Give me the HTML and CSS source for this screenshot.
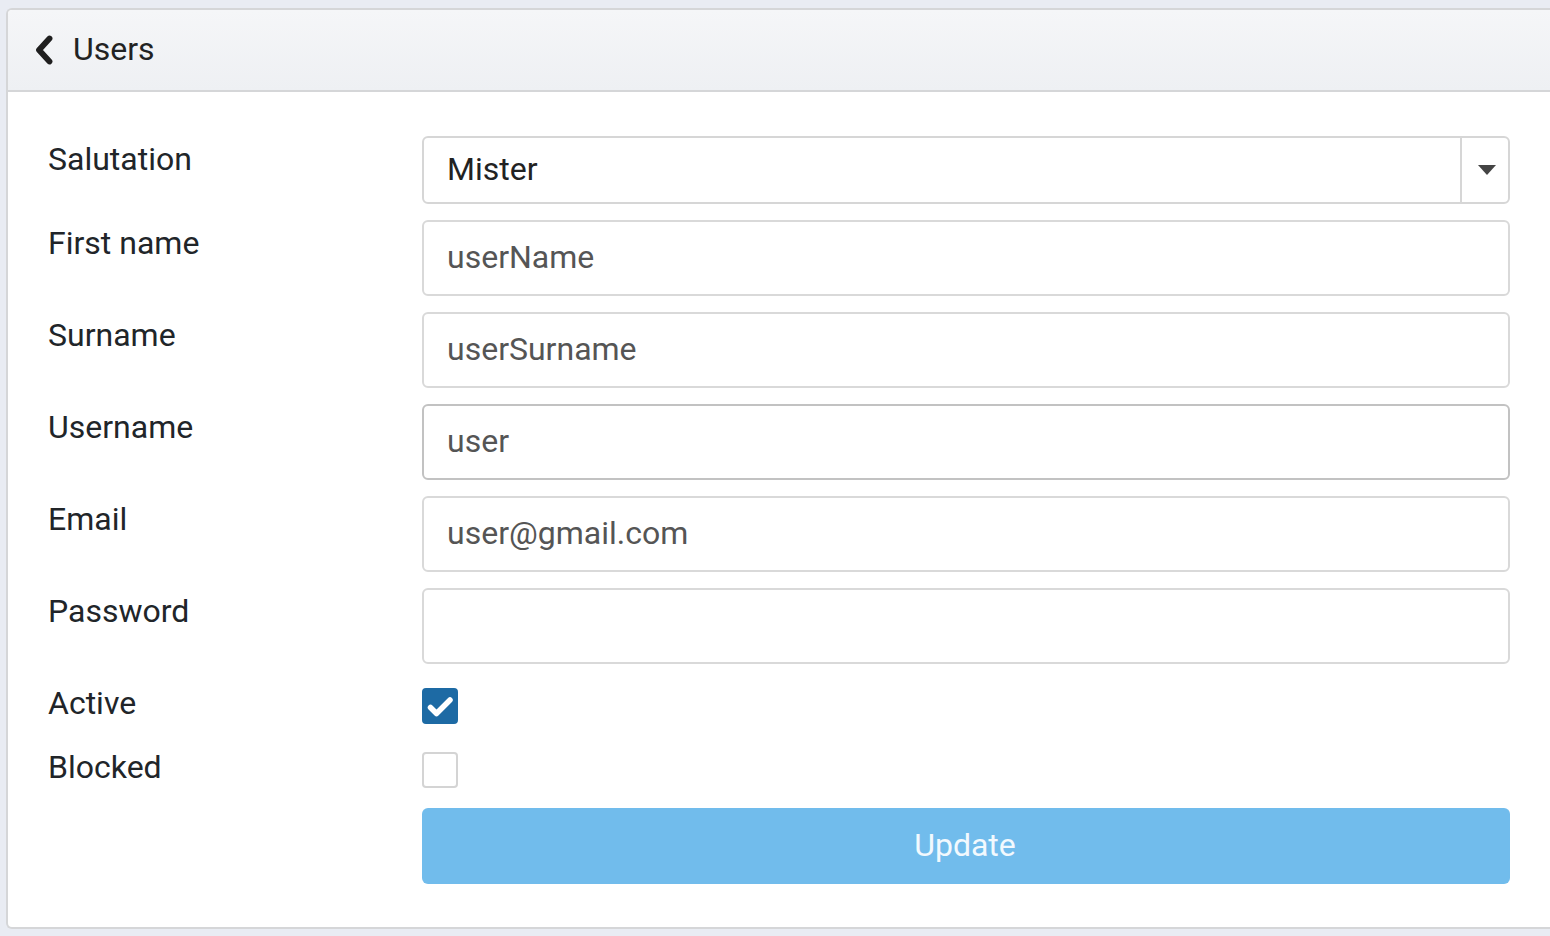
FILE: index.html
```html
<!DOCTYPE html>
<html>
<head>
<meta charset="utf-8">
<link rel="stylesheet" href="styles.css">
</head>
<body>
<div class="panel">
  <div class="panel-header">
    <svg class="back" width="18" height="30" viewBox="0 0 18 30"><polyline points="14.5,3.5 4,15 14.5,26.5" fill="none" stroke="#1f1f1f" stroke-width="5.8" stroke-linecap="round" stroke-linejoin="round"/></svg>
    <span class="title">Users</span>
  </div>
  <div class="form">
    <div class="label">Salutation</div>
    <div class="select">
      <span class="select-value">Mister</span>
      <span class="select-arrow"><span class="tri"></span></span>
    </div>

    <div class="label">First name</div>
    <div class="input">userName</div>

    <div class="label">Surname</div>
    <div class="input">userSurname</div>

    <div class="label">Username</div>
    <div class="input input-focus">user</div>

    <div class="label">Email</div>
    <div class="input">user@gmail.com</div>

    <div class="label">Password</div>
    <div class="input"></div>

    <div class="label">Active</div>
    <div class="check-cell"><span class="checkbox checked"><svg width="32" height="32" viewBox="0 0 32 32"><polyline points="6.5,17.5 12.5,23.5 26,10" fill="none" stroke="#fff" stroke-width="5.5" stroke-linecap="round" stroke-linejoin="round"/></svg></span></div>

    <div class="label">Blocked</div>
    <div class="check-cell"><span class="checkbox"></span></div>

    <div class="label"></div>
    <div class="button">Update</div>
  </div>
</div>
</body>
</html>
```

FILE: styles.css
```css
html, body {
  margin: 0;
  padding: 0;
}
body {
  background: #e9ecf3;
  font-family: Roboto, "Liberation Sans", sans-serif;
  overflow: hidden;
  height: 936px;
}
.panel {
  margin: 8px 0 0 6px;
  width: 1542px;
  background: #fff;
  border: 2px solid #d5d6d8;
  border-right: none;
  border-radius: 6px 0 0 6px;
  overflow: hidden;
}
.panel-header {
  box-sizing: border-box;
  height: 82px;
  padding-bottom: 2px;
  background: linear-gradient(#f5f6f8, #eef0f3);
  border-bottom: 2px solid #d5d6d8;
  display: flex;
  align-items: center;
  padding-left: 27px;
  gap: 20px;
}
.back {
  display: block;
  margin-top: 1px;
}
.title {
  font-size: 32px;
  color: #222;
  line-height: 48px;
}
.form {
  display: grid;
  grid-template-columns: 374px 1088px;
  row-gap: 16px;
  padding: 44px 0 43px 40px;
}
.label {
  font-size: 32px;
  line-height: 46px;
  height: 48px;
  color: #212529;
}
.select {
  height: 64px;
  border: 2px solid #d6d6d6;
  border-radius: 6px;
  display: flex;
  align-items: stretch;
}
.select-value {
  flex: 1;
  font-size: 32px;
  line-height: 48px;
  padding: 7px 24px 9px 23px;
  color: #222;
}
.select-arrow {
  width: 46px;
  border-left: 2px solid #d6d6d6;
  display: flex;
  align-items: center;
  justify-content: center;
}
.tri {
  width: 0;
  height: 0;
  border-left: 9px solid transparent;
  border-right: 9px solid transparent;
  border-top: 10px solid #444;
  margin-left: 4px;
  margin-top: -1px;
}
.input {
  height: 48px;
  padding: 11px 24px 13px 23px;
  border: 2px solid #d9d9d9;
  border-radius: 6px;
  font-size: 32px;
  line-height: 48px;
  color: #555;
}
.input-focus {
  border-color: #c2c2c2;
}
.check-cell {
  height: 48px;
}
.checkbox {
  display: block;
  box-sizing: border-box;
  width: 36px;
  height: 36px;
  margin-top: 8px;
  border: 2px solid #d4d4d4;
  border-radius: 4px;
  background: #fff;
}
.checkbox.checked {
  background: #1d6aa4;
  border-color: #1d6aa4;
}
.checkbox svg {
  display: block;
}
.button {
  height: 76px;
  background: #71bcec;
  border-radius: 6px;
  color: #f2f9fe;
  font-size: 32px;
  line-height: 74px;
  text-align: center;
  padding-right: 2px;
}
```
